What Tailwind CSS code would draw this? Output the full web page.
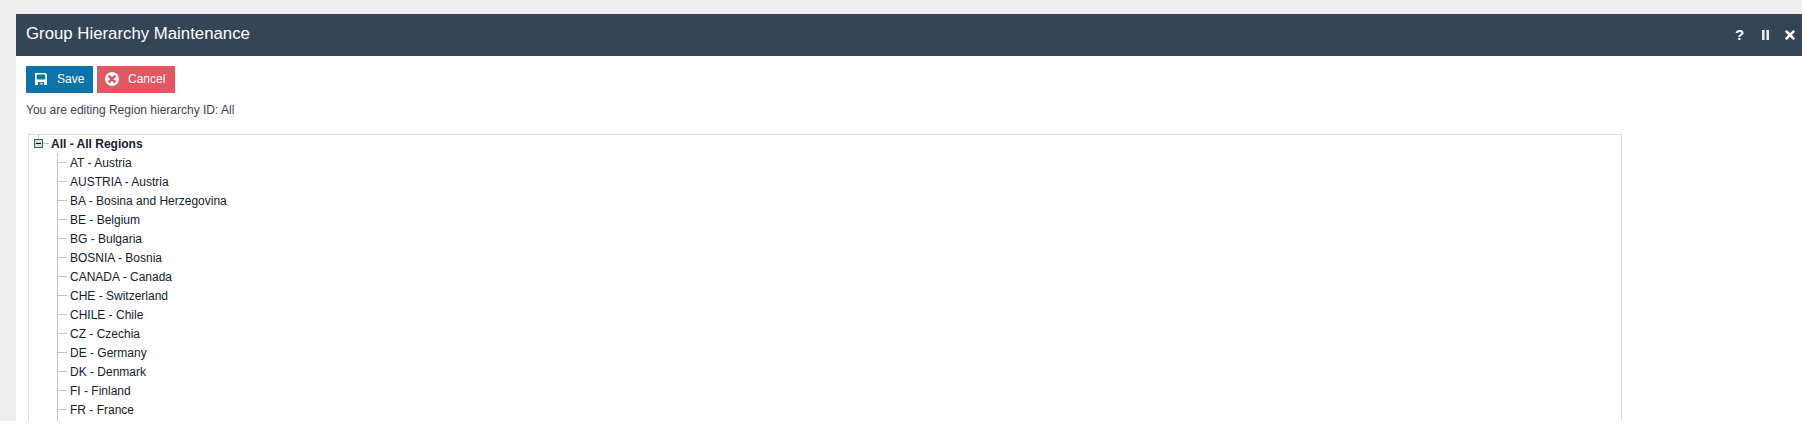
<!DOCTYPE html>
<html lang="en">
<head>
    <meta charset="UTF-8">
    <title>Group Hierarchy Maintenance</title>
    <script src="https://cdn.jsdelivr.net/npm/@tailwindcss/browser@4"></script>
</head>
<body class="bg-white font-['Liberation_Sans',Arial,sans-serif]">

    <div class="h-[421px] overflow-hidden bg-[#eeeeee] pt-[14px] pl-[16px]">
        <div class="h-full bg-white">

            <!-- Title bar -->
            <header class="h-[42px] bg-[#354556] text-white flex items-center justify-between pl-[10px] pr-[7px]">
                <h1 class="text-[16.8px] pb-[2px]">Group Hierarchy Maintenance</h1>
                <div class="flex items-center font-bold text-[15px]">
                    <span class="w-[8px] text-center mr-[19px]">?</span>
                    <svg class="mr-[16px]" width="7" height="10" viewBox="0 0 7 10" fill="#e8eaec"><rect x="0" y="0" width="2.6" height="10"/><rect x="4.4" y="0" width="2.6" height="10"/></svg>
                    <svg width="10" height="10" viewBox="0 0 10 10" stroke="#fff" stroke-width="2.6" fill="none"><path d="M.8.8l8.4 8.4M9.200.8L.8 9.200"/></svg>
                </div>
            </header>

            <div class="px-[10px] pt-[10px]">

                <!-- Buttons -->
                <div class="flex gap-[4px]">
                    <button class="h-[27px] w-[67px] bg-[#0e72ab] text-white text-[12px] flex items-center pl-[9px] gap-[10px] pb-px">
                        <svg width="12" height="12" viewBox="0 0 12 12"><path fill="#fff" fill-rule="evenodd" d="M0 0h10.500L12 1.500V12H0zM1.800 1.500v5h8.400v-5zM3 9v3h6V9z"/><rect x="5.500" y="9.800" width="2" height="1.600" fill="#fff"/></svg>
                        Save
                    </button>
                    <button class="h-[27px] w-[78px] bg-[#e25762] text-white text-[12px] flex items-center pl-[8px] gap-[9px] pb-px">
                        <svg width="14" height="14" viewBox="0 0 14 14"><circle cx="7" cy="7" r="7" fill="#fff"/><path d="M4.300 4.300l5.400 5.400M9.700 4.300l-5.400 5.400" stroke="#e25762" stroke-width="2.600" stroke-linecap="round"/></svg>
                        Cancel
                    </button>
                </div>

                <p class="text-[12px] leading-[14px] text-[#3f3f55] mt-[10px]">You are editing Region hierarchy ID: All</p>

                <!-- Tree -->
                <div class="ml-[2px] mt-[17px] w-[1594px] h-[400px] border border-[#dddddd] pl-[5px] text-[12px] text-[#12202c]">
                    <div class="relative flex items-center h-[19px] -mt-px">
                        <span class="absolute left-[4px] top-0 w-px h-[5px] bg-[#c9c7b8]"></span>
                        <span class="relative w-[9px] h-[9px] border border-[#2f6b4a] bg-[#dcdfd6] flex items-center justify-center">
                            <span class="w-[5px] h-px bg-black"></span>
                        </span>
                        <span class="w-[6px] h-px bg-[#c9c7b8]"></span>
                        <b class="ml-[2px]">All - All Regions</b>
                    </div>
                    <ul class="ml-[23px] border-l border-[#c9c7b8]">
                        <li class="flex items-center h-[19px]"><span class="w-[9px] h-px bg-[#c9c7b8] mr-[3px]"></span>AT - Austria</li>
                        <li class="flex items-center h-[19px]"><span class="w-[9px] h-px bg-[#c9c7b8] mr-[3px]"></span>AUSTRIA - Austria</li>
                        <li class="flex items-center h-[19px]"><span class="w-[9px] h-px bg-[#c9c7b8] mr-[3px]"></span>BA - Bosina and Herzegovina</li>
                        <li class="flex items-center h-[19px]"><span class="w-[9px] h-px bg-[#c9c7b8] mr-[3px]"></span>BE - Belgium</li>
                        <li class="flex items-center h-[19px]"><span class="w-[9px] h-px bg-[#c9c7b8] mr-[3px]"></span>BG - Bulgaria</li>
                        <li class="flex items-center h-[19px]"><span class="w-[9px] h-px bg-[#c9c7b8] mr-[3px]"></span>BOSNIA - Bosnia</li>
                        <li class="flex items-center h-[19px]"><span class="w-[9px] h-px bg-[#c9c7b8] mr-[3px]"></span>CANADA - Canada</li>
                        <li class="flex items-center h-[19px]"><span class="w-[9px] h-px bg-[#c9c7b8] mr-[3px]"></span>CHE - Switzerland</li>
                        <li class="flex items-center h-[19px]"><span class="w-[9px] h-px bg-[#c9c7b8] mr-[3px]"></span>CHILE - Chile</li>
                        <li class="flex items-center h-[19px]"><span class="w-[9px] h-px bg-[#c9c7b8] mr-[3px]"></span>CZ - Czechia</li>
                        <li class="flex items-center h-[19px]"><span class="w-[9px] h-px bg-[#c9c7b8] mr-[3px]"></span>DE - Germany</li>
                        <li class="flex items-center h-[19px]"><span class="w-[9px] h-px bg-[#c9c7b8] mr-[3px]"></span>DK - Denmark</li>
                        <li class="flex items-center h-[19px]"><span class="w-[9px] h-px bg-[#c9c7b8] mr-[3px]"></span>FI - Finland</li>
                        <li class="flex items-center h-[19px]"><span class="w-[9px] h-px bg-[#c9c7b8] mr-[3px]"></span>FR - France</li>
                        <li class="h-[19px]"></li>
                    </ul>
                </div>
            </div>
        </div>
    </div>

</body>
</html>
